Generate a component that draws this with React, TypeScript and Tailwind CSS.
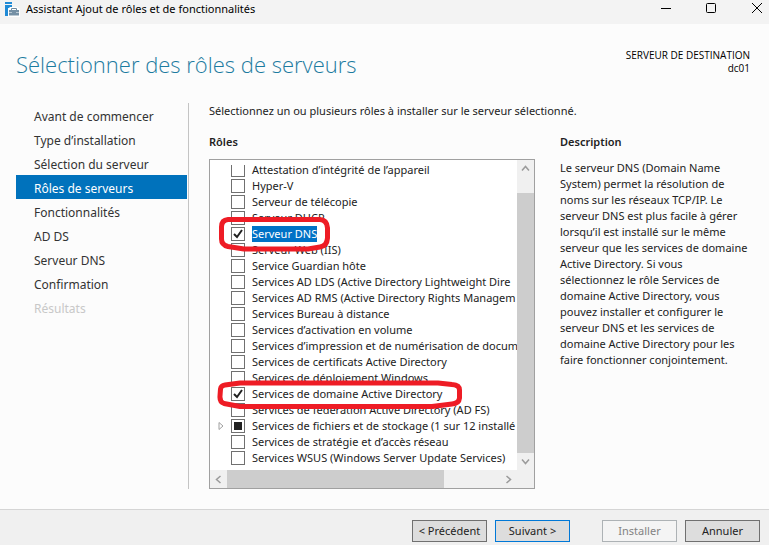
import React from 'react';

type CheckState = 'off' | 'on' | 'partial';

interface Role {
    label: string;
    state?: CheckState;
    expandable?: boolean;
    selected?: boolean;
}

const steps = [
    'Avant de commencer',
    'Type d’installation',
    'Sélection du serveur',
    'Rôles de serveurs',
    'Fonctionnalités',
    'AD DS',
    'Serveur DNS',
    'Confirmation',
    'Résultats',
];

const roles: Role[] = [
    { label: 'Attestation d’intégrité de l’appareil' },
    { label: 'Hyper-V' },
    { label: 'Serveur de télécopie' },
    { label: 'Serveur DHCP' },
    { label: 'Serveur DNS', state: 'on', selected: true },
    { label: 'Serveur Web (IIS)' },
    { label: 'Service Guardian hôte' },
    { label: 'Services AD LDS (Active Directory Lightweight Dire' },
    { label: 'Services AD RMS (Active Directory Rights Managem' },
    { label: 'Services Bureau à distance' },
    { label: 'Services d’activation en volume' },
    { label: 'Services d’impression et de numérisation de docum' },
    { label: 'Services de certificats Active Directory' },
    { label: 'Services de déploiement Windows' },
    { label: 'Services de domaine Active Directory', state: 'on' },
    { label: 'Services de fédération Active Directory (AD FS)' },
    { label: 'Services de fichiers et de stockage (1 sur 12 installé', state: 'partial', expandable: true },
    { label: 'Services de stratégie et d’accès réseau' },
    { label: 'Services WSUS (Windows Server Update Services)' },
];

const TitleBar: React.FC = () => (
    <header className="flex h-6 shrink-0 items-start justify-between bg-[#f3f3f3] pl-1">
        <div className="flex items-center gap-1.5">
            <svg width="16" height="16" viewBox="0 0 16 16" aria-hidden="true">
                <path d="M1 1h7v2H1zM1 4h7v3H4v8H1z" fill="#1f8ad6" />
                <path d="M4 8l2-2h7l3 2v8H4z" fill="#fff" />
                <path d="M7.500 9V7.500h5V9" fill="none" stroke="#6f8ba0" />
                <path d="M5 9h10v5.500H5z" fill="#7590a5" />
                <path d="M5 11.500h3M12 11.500h3" stroke="#b9c8d3" />
            </svg>
            <span className="text-[11px] leading-[18px] text-black">Assistant Ajout de rôles et de fonctionnalités</span>
        </div>
        <div className="flex">
            <button type="button" aria-label="Réduire" className="flex h-4 w-[45px] items-center justify-center">
                <svg width="10" height="10" viewBox="0 0 10 10" stroke="#000"><path d="M0 5.500h10" /></svg>
            </button>
            <button type="button" aria-label="Agrandir" className="flex h-4 w-[45px] items-center justify-center">
                <svg width="10" height="10" viewBox="0 0 10 10" fill="none" stroke="#000"><rect x="0.500" y="0.500" width="9" height="9" rx="1" /></svg>
            </button>
            <button type="button" aria-label="Fermer" className="flex h-4 w-9 items-center justify-center pl-3">
                <svg width="10" height="10" viewBox="0 0 10 10" stroke="#000"><path d="M0 0l10 10M10 0L0 10" /></svg>
            </button>
        </div>
    </header>
);

const Steps: React.FC = () => (
    <nav className="w-[173px] shrink-0 border-r border-[#c4c4c4] pr-px">
        {steps.map((step, i) => (
            <a
                key={step}
                href="#"
                className={`block h-6 pl-[18px] text-xs leading-7 ${
                    i === 3 ? 'bg-[#0072bc] text-white' : i === 8 ? 'text-[#c8c8c8]' : 'text-[#333333]'
                }`}
            >
                {step}
            </a>
        ))}
    </nav>
);

const RoleRow: React.FC<{ role: Role }> = ({ role }) => {
    const state = role.state ?? 'off';
    return (
        <li className="flex h-4 items-center pl-2">
            <span className="w-[13px] shrink-0">
                {role.expandable && (
                    <svg width="6" height="8" viewBox="0 0 6 8" fill="none" stroke="#a0a0a0"><path d="M1 0.500v7l4-3.500z" /></svg>
                )}
            </span>
            <label className="flex items-center gap-[7px] whitespace-nowrap text-[11px] leading-4">
                <span className="grid h-[14px] w-[14px] shrink-0 place-items-center border border-[#707070] bg-white">
                    <input type="checkbox" defaultChecked={state === 'on'} className="col-start-1 row-start-1 h-3 w-3 appearance-none" />
                    {state === 'on' && (
                        <svg className="pointer-events-none col-start-1 row-start-1" width="12" height="12" viewBox="0 0 12 12" fill="none" stroke="#212121" strokeWidth="2">
                            <path d="M2 6l3 3 5-7" />
                        </svg>
                    )}
                    {state === 'partial' && <span className="pointer-events-none col-start-1 row-start-1 h-2 w-2 bg-[#212121]" />}
                </span>
                <span className={role.selected ? 'bg-[#0072c6] text-white' : ''}>{role.label}</span>
            </label>
        </li>
    );
};

const Chevron: React.FC<{ d: string }> = ({ d }) => (
    <svg width="9" height="9" viewBox="0 0 9 9" fill="none" stroke="#9a9a9a" strokeWidth="1.500"><path d={d} /></svg>
);

const RoleList: React.FC = () => (
    <div className="relative border border-[#a0a0a0] bg-white">
        <div className="flex">
            <div className="min-w-0 flex-1 pt-[5px] pb-1">
                <div className="overflow-hidden">
                    <ul className="-mt-[3px]">
                        {roles.map((role) => <RoleRow key={role.label} role={role} />)}
                    </ul>
                </div>
            </div>
            <div className="flex w-[17px] shrink-0 flex-col bg-[#f0f0f0]">
                <div className="flex h-[33px] justify-center pt-1"><Chevron d="M1 6.500l3.500-4 3.500 4" /></div>
                <div className="flex-1 bg-[#cdcdcd]" />
                <div className="flex h-[17px] items-center justify-center"><Chevron d="M1 2.500l3.500 4 3.500-4" /></div>
            </div>
        </div>
        <div className="flex h-[18px] bg-[#f0f0f0]">
            <div className="flex w-[17px] items-center justify-center"><Chevron d="M6.500 1l-4 3.500 4 3.500" /></div>
            <div className="flex-1 bg-[#cdcdcd]" />
            <div className="flex w-[90px] items-center pl-[60px]"><Chevron d="M2.500 1l4 3.500-4 3.500" /></div>
        </div>
        {/* hand-drawn rings around the two ticked roles */}
        <svg className="pointer-events-none absolute top-0 left-0 overflow-visible" width="324" height="328" viewBox="210 160 324 328" fill="none" stroke="#ee1c25" strokeWidth="5" strokeLinejoin="round">
            <path d="M228 219.500H320Q327 220 327.500 228V238Q327 246 320 247L308 249H244L228 246.500Q221.500 245 221.500 239V227Q221.500 220 228 219.500Z" />
            <path d="M225 385L240 383H438L452 384.500Q459.500 385 459.500 390V398Q459 403.500 452 404L432 406.500H240L224 403.500Q219.500 402 220 396L220.500 389Q221 385.500 225 385Z" />
        </svg>
    </div>
);

const Description: React.FC = () => (
    <section className="w-[200px] shrink-0">
        <h2 className="text-[11px] leading-4 font-semibold">Description</h2>
        <p className="mt-2.5 pr-2 text-[11px] leading-4">
            Le serveur DNS (Domain Name System) permet la résolution de noms sur les réseaux TCP/IP. Le serveur DNS est plus
            facile à gérer lorsqu’il est installé sur le même serveur que les services de domaine Active Directory. Si vous
            <br />
            sélectionnez le rôle Services de domaine Active Directory, vous pouvez installer et configurer le serveur DNS et
            les services de domaine Active Directory pour les faire fonctionner conjointement.
        </p>
    </section>
);

const App: React.FC = () => {
    const button = 'h-[22px] w-[75px] border text-[11px] leading-4 whitespace-nowrap';
    return (
        <div className="flex min-h-screen flex-col bg-[#fcfcfc] font-['Noto_Sans','Open_Sans',sans-serif] text-[#222222]">
            <TitleBar />
            <div className="flex items-start justify-between pt-6 pr-[19px] pl-4">
                <h1 className="font-['Open_Sans','Noto_Sans',sans-serif] text-[22px] leading-8 font-light text-[#1c7ba0]">Sélectionner des rôles de serveurs</h1>
                <div className="pt-px text-right font-['Open_Sans','Noto_Sans',sans-serif] text-[10px] leading-[13px] text-black">
                    <div>SERVEUR DE DESTINATION</div>
                    <div>dc01</div>
                </div>
            </div>
            <main className="flex flex-1 pt-[23px] pr-[9px] pb-5 pl-4">
                <Steps />
                <div className="min-w-0 flex-1 pl-5">
                    <p className="text-[11px] leading-4 whitespace-nowrap">
                        Sélectionnez un ou plusieurs rôles à installer sur le serveur sélectionné.
                    </p>
                    <div className="mt-[15px] flex gap-[25px]">
                        <section className="min-w-0 flex-1">
                            <h2 className="mb-[9px] text-[11px] leading-4 font-semibold">Rôles</h2>
                            <RoleList />
                        </section>
                        <Description />
                    </div>
                </div>
            </main>
            <footer className="flex shrink-0 justify-end gap-2 border-t border-[#d5d5d5] bg-[#f0f0f0] pt-2.5 pr-[9px] pb-[3px]">
                <button type="button" className={`${button} border-[#707070] bg-[#dddddd]`}>&lt; Précédent</button>
                <button type="button" className={`${button} mr-6 border-[#0078d7] bg-[#dddddd]`}>Suivant &gt;</button>
                <button type="button" disabled className={`${button} border-[#adb2b5] bg-[#f4f4f4] text-[#838383]`}>Installer</button>
                <button type="button" className={`${button} border-[#707070] bg-[#dddddd]`}>Annuler</button>
            </footer>
        </div>
    );
};

export default App;
